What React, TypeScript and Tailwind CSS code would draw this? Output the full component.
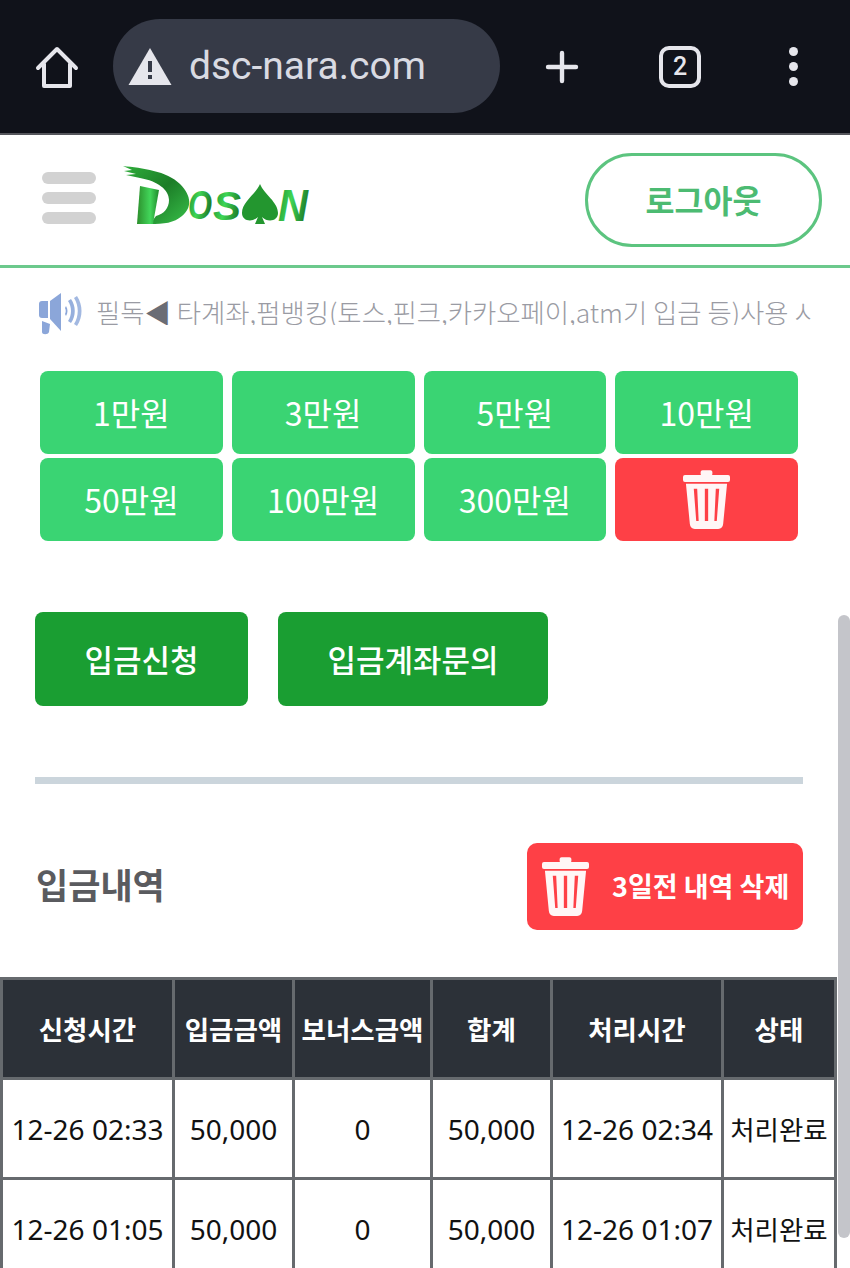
import { Plus } from "lucide-react";

const kr = "font-['Noto_Sans_CJK_KR','Noto_Sans',sans-serif]";

const amounts = ["1만원", "3만원", "5만원", "10만원", "50만원", "100만원", "300만원"];
const headers = ["신청시간", "입금금액", "보너스금액", "합계", "처리시간", "상태"];
const rows = [
  ["12-26 02:33", "50,000", "0", "50,000", "12-26 02:34", "처리완료"],
  ["12-26 01:05", "50,000", "0", "50,000", "12-26 01:07", "처리완료"],
];
const colWidths = ["w-[172px]", "w-[120px]", "w-[138px]", "w-[120px]", "w-[171px]", "w-[113px]"];

function TrashIcon({ className }: { className?: string }) {
  return (
    <svg viewBox="0 0 48 60" className={className} fill="#fff6f6">
      <rect x="18" y="0" width="12" height="6" rx="2" />
      <rect x="0" y="5" width="48" height="7" rx="2" />
      <path
        fillRule="evenodd"
        d="M3 14h42l-4 41c-.3 3-2 5-5 5H12c-3 0-4.700-2-5-5L3 14zM11 19l2.500 33h2.500L14.500 19h-3.500zM22.300 19v33h3.400V19h-3.400zM33.500 19 32 52h2.500L37 19h-3.500z"
      />
    </svg>
  );
}

function Logo() {
  return (
    <svg viewBox="0 0 190 62" className="h-[62px] w-[190px] overflow-visible">
      <defs>
        <linearGradient id="logoGreen" x1="0" y1="0" x2="1" y2="0.300">
          <stop offset="0" stopColor="#1f8a2c" />
          <stop offset="0.500" stopColor="#3fd655" />
          <stop offset="1" stopColor="#1f7f2a" />
        </linearGradient>
        <linearGradient id="logoBrush" x1="0" y1="0" x2="1" y2="1">
          <stop offset="0" stopColor="#2fae3b" />
          <stop offset="0.500" stopColor="#1c7d27" />
          <stop offset="1" stopColor="#38c04a" />
        </linearGradient>
        <linearGradient id="logoStem" x1="0" y1="0" x2="1" y2="0">
          <stop offset="0" stopColor="#2c8f2c" />
          <stop offset="0.600" stopColor="#42d65a" />
          <stop offset="1" stopColor="#1f8a2c" />
        </linearGradient>
      </defs>
      <path
        d="M1 0C20 2 45 5 58 18 70 30 70 42 60 50 52 57 42 58 28 58l6-8C42 48 47 42 47 34 47 24 36 15 18 12L4 9l10-1L2 5l8-1z"
        fill="url(#logoBrush)"
      />
      <path d="M18 20 37 24 31 58H15z" fill="url(#logoStem)" />
      <path
        d="M138 18C142 28 156 36 156 47 156 55 146 57 140 51L143 58H133L136 51C130 57 120 55 120 47 120 36 134 28 138 18z"
        fill="#23962f"
      />
      <text
        x="66"
        y="53"
        fontFamily="'Liberation Sans', sans-serif"
        fontWeight="700"
        fontStyle="italic"
        fontSize="40"
        fill="url(#logoGreen)"
        textLength="24"
        lengthAdjust="spacingAndGlyphs"
      >
        O
      </text>
      <text
        x="91"
        y="54"
        fontFamily="'Liberation Sans', sans-serif"
        fontWeight="700"
        fontStyle="italic"
        fontSize="40"
        fill="url(#logoGreen)"
        textLength="28"
        lengthAdjust="spacingAndGlyphs"
      >
        S
      </text>
      <text
        x="156"
        y="55"
        fontFamily="'Liberation Sans', sans-serif"
        fontWeight="700"
        fontStyle="italic"
        fontSize="44"
        fill="url(#logoGreen)"
        textLength="30"
        lengthAdjust="spacingAndGlyphs"
      >
        N
      </text>
    </svg>
  );
}

function BrowserBar() {
  return (
    <div className="flex h-[135px] shrink-0 items-start border-b-2 border-[#55565c] bg-[#10121a]">
      <svg viewBox="0 0 44 44" className="ml-[35px] mt-[46px] h-[44px] w-[44px]" fill="none" stroke="#e6e6ec" strokeWidth="4" strokeLinejoin="round" strokeLinecap="round">
        <path d="M3 22 22 3l19 19M9 18v22h26V18" />
      </svg>
      <div className="ml-[34px] mt-[19px] flex h-[94px] w-[387px] items-center rounded-[47px] bg-[#363a47] pl-[15px]">
        <svg viewBox="0 0 44 38" className="h-[38px] w-[44px]">
          <path d="M22 1 43.500 38H.5z" fill="#e6e6ec" />
          <rect x="20" y="14" width="4" height="11" fill="#363a47" />
          <rect x="20" y="28" width="4" height="4" fill="#363a47" />
        </svg>
        <span className="ml-[17px] font-['Roboto',sans-serif] text-[39px] leading-none text-[#d9dae2]">dsc-nara.com</span>
      </div>
      <Plus className="ml-[38px] mt-[43px] h-[48px] w-[48px] text-[#e6e6ec]" strokeWidth={2.200} />
      <div className="ml-[73px] mt-[46px] flex h-[42px] w-[42px] items-center justify-center rounded-[10px] border-[4px] border-[#e6e6ec] font-['Roboto',sans-serif] text-[25px] font-medium text-[#e6e6ec]">
        2
      </div>
      <div className="ml-[88px] mt-[47px] flex flex-col gap-[6px]">
        <span className="h-[9px] w-[9px] rounded-full bg-[#e6e6ec]" />
        <span className="h-[9px] w-[9px] rounded-full bg-[#e6e6ec]" />
        <span className="h-[9px] w-[9px] rounded-full bg-[#e6e6ec]" />
      </div>
    </div>
  );
}

function SiteHeader() {
  return (
    <div className="flex h-[133px] shrink-0 items-center border-b-[3px] border-[#6cc98c] bg-white pl-[42px] pr-[28px]">
      <div className="mt-[-4px] flex flex-col gap-[8px]">
        <span className="h-[12px] w-[54px] rounded-full bg-[#d2d2d2]" />
        <span className="h-[12px] w-[54px] rounded-full bg-[#d2d2d2]" />
        <span className="h-[12px] w-[54px] rounded-full bg-[#d2d2d2]" />
      </div>
      <div className="ml-[26px] mt-[-6px]">
        <Logo />
      </div>
      <div className="ml-auto flex h-[94px] w-[237px] items-center justify-center rounded-[47px] border-[3px] border-[#5cc47f] text-[31.500px] font-bold text-[#4cbb72]">
        로그아웃
      </div>
    </div>
  );
}

function Notice() {
  return (
    <div className="flex h-[82px] shrink-0 items-center pl-[38px] pr-[38px]">
      <svg viewBox="0 0 46 42" className="mt-[10px] h-[42px] w-[46px] shrink-0" fill="#8ba6d9">
        <path d="M1 11c0-2 1-3 3-3h6v17H4c-2 0-3-1-3-3z" />
        <path d="M12 8 23 0v38l-11-12z" />
        <path d="M4 28l8 3-1 8c-1 3-7 3-7 0z" />
        <path d="M28 13c2 3 2 7 0 10l-1-2c1-2 1-4 0-6z" />
        <path d="M33 6c5 7 5 17 0 24l-3-2c4-6 4-14 0-20z" opacity="0.900" />
        <path d="M39 3c6 9 6 21 0 30l-3-2c5-8 5-18 0-26z" opacity="0.800" />
      </svg>
      <div className="ml-[12px] mt-[6px] w-[716px] overflow-hidden whitespace-nowrap text-[26.400px] font-light leading-none text-[#9a9ba3]">
        필독<span className="text-[#6b6d75]">◀</span> 타계좌,펌뱅킹(토스,핀크,카카오페이,atm기 입금 등)사용 시
      </div>
    </div>
  );
}

function DepositTable() {
  return (
    <table className="mt-[47px] w-[837px] table-fixed border-collapse border-[3px] border-[#666a6e]">
      <colgroup>
        {colWidths.map((w, i) => (
          <col key={i} className={w} />
        ))}
      </colgroup>
      <thead>
        <tr className="h-[100px] bg-[#2c3138]">
          {headers.map((h) => (
            <th key={h} className="whitespace-nowrap border-[3px] border-[#666a6e] p-0 text-center text-[26.500px] font-bold text-white">
              {h}
            </th>
          ))}
        </tr>
      </thead>
      <tbody>
        {rows.map((row) => (
          <tr key={row[0]} className="h-[100px] bg-white">
            {row.map((c, i) => (
              <td
                key={i}
                className={
                  i === 5
                    ? "whitespace-nowrap border-[3px] border-[#666a6e] p-0 text-center text-[26.500px] text-[#111]"
                    : "whitespace-nowrap border-[3px] border-[#666a6e] p-0 text-center font-['Noto_Sans','Noto_Sans_CJK_KR',sans-serif] text-[28px] text-[#111]"
                }
              >
                {c}
              </td>
            ))}
          </tr>
        ))}
      </tbody>
    </table>
  );
}

export default function App() {
  return (
    <div className={`${kr} relative flex h-[1268px] w-[850px] flex-col overflow-hidden bg-white`}>
      <BrowserBar />
      <SiteHeader />
      <Notice />
      <div className="pt-[21px]">
        <div className="ml-[40px] grid w-[758px] grid-cols-4 gap-x-[9px] gap-y-[4.500px]">
          {amounts.map((a) => (
            <div key={a} className="flex h-[82.500px] items-center justify-center rounded-[8px] bg-[#3ad473] text-[32px] text-white">
              {a}
            </div>
          ))}
          <div className="flex h-[82.500px] items-center justify-center rounded-[8px] bg-[#fe4046]">
            <TrashIcon className="h-[59px] w-[47px]" />
          </div>
        </div>

        <div className="ml-[35px] mt-[71.500px] flex gap-[30px]">
          <div className="flex h-[94px] w-[213px] items-center justify-center rounded-[8px] bg-[#1a9e32] text-[31px] font-medium text-white">
            입금신청
          </div>
          <div className="flex h-[94px] w-[270px] items-center justify-center rounded-[8px] bg-[#1a9e32] text-[31px] font-medium text-white">
            입금계좌문의
          </div>
        </div>

        <div className="ml-[35px] mt-[71px] h-[7px] w-[768px] bg-[#cbd5dc]" />

        <div className="ml-[36px] mt-[59px] flex w-[767px] items-center justify-between">
          <h2 className="mb-[5px] text-[35px] font-bold text-[#5a5b5f]">입금내역</h2>
          <div className="flex h-[87px] w-[276px] items-center rounded-[10px] bg-[#fe4046] pl-[15px]">
            <TrashIcon className="h-[59px] w-[47px]" />
            <span className="ml-[23px] whitespace-nowrap text-[27px] font-bold text-white">3일전 내역 삭제</span>
          </div>
        </div>

        <DepositTable />
      </div>

      <div className="absolute right-0 top-[615px] h-[623px] w-[12px] rounded-full bg-[#c4c5ca]" />
    </div>
  );
}
